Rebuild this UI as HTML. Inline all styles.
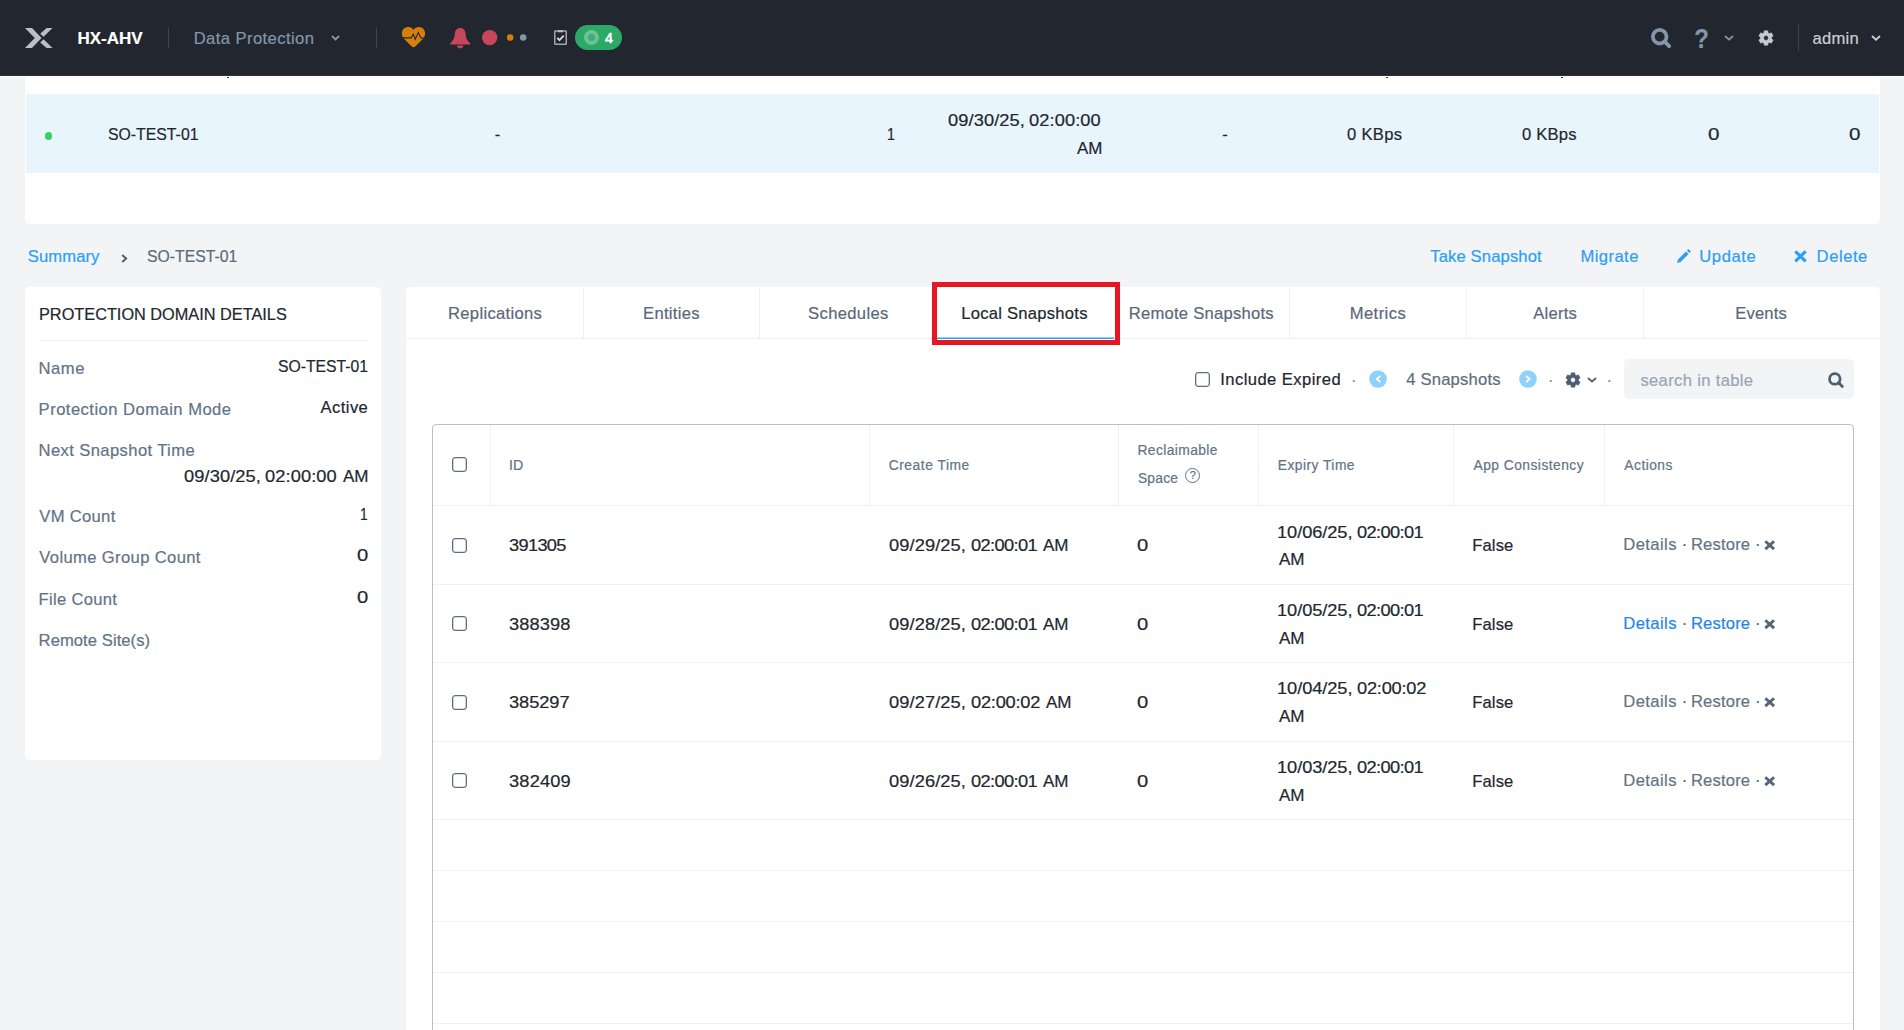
<!DOCTYPE html>
<html lang="en"><head><meta charset="utf-8"><title>HX-AHV - Data Protection</title>
<style>
html,body{margin:0;padding:0}
body{width:1904px;height:1030px;overflow:hidden;background:#f2f4f6;font-family:"Liberation Sans",sans-serif;position:relative}
.t{position:absolute;white-space:nowrap;line-height:1;-webkit-text-stroke:.2px}
.a{position:absolute}
.cb{position:absolute;width:13px;height:13px;border:1px solid #5c6e86;border-radius:3px;background:#fff;box-shadow:inset 0 0 0 .3px #5c6e86}
.vs{position:absolute;width:1px;background:#eef0f3}
.hs{position:absolute;height:1px;background:#eef0f3}
svg{position:absolute;overflow:visible}
</style></head><body>

<div class="a" style="left:25px;top:60px;width:1855px;height:164px;background:#fff;border-radius:0 0 5px 5px"></div>
<div class="a" style="left:26px;top:94px;width:1853px;height:78.5px;background:#e9f5fd"></div>
<div class="a" style="left:227px;top:76px;width:2px;height:2px;background:#2b3038"></div>
<div class="a" style="left:1386px;top:76px;width:2px;height:2px;background:#2b3038"></div>
<div class="a" style="left:1561px;top:76px;width:2px;height:2px;background:#2b3038"></div>
<div class="a" style="left:45px;top:132px;width:7px;height:7.5px;border-radius:50%;background:#36d068"></div>
<span class="t" style="left:108.34px;top:127px;font-size:16.6px;color:#22272e;letter-spacing:-0.005px;transform:scaleX(0.953);transform-origin:0 0;">SO-TEST-01</span>
<span class="t" style="left:494.64px;top:127px;font-size:16.6px;color:#22272e;">-</span>
<span class="t" style="left:886.83px;top:127px;font-size:16.6px;color:#22272e;transform:scaleX(0.859);transform-origin:0 0;">1</span>
<span class="t" style="left:947.91px;top:113px;font-size:16.6px;color:#22272e;letter-spacing:0.085px;transform:scaleX(1.1);transform-origin:0 0;">09/30/25,</span>
<span class="t" style="left:1029.31px;top:113px;font-size:16.6px;color:#22272e;letter-spacing:0.084px;transform:scaleX(1.1);transform-origin:0 0;">02:00:00</span>
<span class="t" style="left:1076.55px;top:141px;font-size:16.6px;color:#22272e;letter-spacing:0.009px;transform:scaleX(1.022);transform-origin:0 0;">AM</span>
<span class="t" style="left:1222.34px;top:127px;font-size:16.6px;color:#22272e;">-</span>
<span class="t" style="left:1346.97px;top:127px;font-size:16.6px;color:#22272e;letter-spacing:0.305px;">0 KBps</span>
<span class="t" style="left:1521.97px;top:127px;font-size:16.6px;color:#22272e;letter-spacing:0.205px;">0 KBps</span>
<span class="t" style="left:1707.88px;top:127px;font-size:16.6px;color:#22272e;transform:scaleX(1.242);transform-origin:0 0;">0</span>
<span class="t" style="left:1848.98px;top:127px;font-size:16.6px;color:#22272e;transform:scaleX(1.242);transform-origin:0 0;">0</span>
<div class="a" style="left:0;top:76px;width:1904px;height:1px;background:#fff"></div>
<div class="a" style="left:0;top:75px;width:1904px;height:1px;background:#2b2f37"></div>
<div class="a" style="left:0;top:0;width:1904px;height:75px;background:#22262e"></div>
<svg style="left:24.8px;top:27.9px" width="27.5" height="20" viewBox="0 0 27.5 20"><g fill="#b9bfcb">
<path d="M0 0H7L16.600 10.100 7 20H0L9.800 10.100Z"/>
<path d="M21.600 0H27.500L18.600 8.700 15.200 5.750Z"/>
<path d="M15.200 14.400L18.600 11.300 27.500 20H21.600Z"/>
</g></svg>
<span class="t" style="left:77.44px;top:30px;font-size:17px;color:#ffffff;font-weight:700;">HX-AHV</span>
<div class="a" style="left:168px;top:28px;width:1px;height:20px;background:#3c4554"></div>
<span class="t" style="left:193.72px;top:31px;font-size:16.6px;color:#8496ab;letter-spacing:0.418px;">Data Protection</span>
<svg style="left:331px;top:35px" width="9" height="6" viewBox="0 0 9 6"><path d="M1 1L4.5 4.5 8 1" fill="none" stroke="#8496ab" stroke-width="1.8"/></svg>
<div class="a" style="left:376px;top:28px;width:1px;height:20px;background:#3c4554"></div>
<svg style="left:402px;top:27px" width="23.100" height="20.400" viewBox="0 0 23.100 20.400">
<path d="M11.500 3C12.600 1.200 14.400 0 16.800 0 20.400 0 23.100 2.800 23.100 6.400 23.100 8.600 22.300 10.400 20.800 12L13.200 19.600C12.200 20.600 10.800 20.600 9.800 19.600L2.200 12C.7 10.400 -.1 8.600 -.1 6.400 -.1 2.800 2.600 0 6.200 0 8.600 0 10.400 1.200 11.500 3Z" fill="#d6800b"/>
<path d="M1.100 10.900H9.100L11.400 7.300 13.300 12.300 16.300 5.600 18.800 11 21.600 10.900" fill="none" stroke="#22262e" stroke-width="1.150" stroke-linejoin="miter"/></svg>
<svg style="left:450px;top:27.800px" width="20.400" height="20.400" viewBox="0 0 20.400 20.400">
<path d="M10.200 0C6.800 0 5 2.500 4.800 5.800 4.600 10 3.600 12.400 .3 15.200 0 15.500 0 16.400 .6 16.400H19.800C20.400 16.400 20.400 15.500 20.100 15.200 16.800 12.400 15.800 10 15.600 5.800 15.400 2.500 13.600 0 10.200 0Z" fill="#c8465c"/>
<path d="M7.100 17.500H13.300A3.100 2.800 0 0 1 7.100 17.500Z" fill="#c8465c"/></svg>
<svg style="left:480px;top:28px" width="50" height="20" viewBox="480 28 50 20"><circle cx="489.700" cy="37.600" r="7.700" fill="#c8465c"/><circle cx="510.200" cy="37.600" r="3.250" fill="#d6800b"/><circle cx="523.200" cy="37.600" r="3.250" fill="#8496ab"/></svg>
<svg style="left:554px;top:30px" width="13" height="15" viewBox="0 0 13 15">
<rect x=".75" y=".95" width="11.500" height="13.300" rx=".5" fill="none" stroke="#9ea5b3" stroke-width="1.500"/>
<rect x="4" y=".2" width="5" height="2.100" fill="#b9bec9"/>
<path d="M3.300 7.800L5.500 10.100 9.700 5.700" fill="none" stroke="#d3d6dd" stroke-width="1.900"/></svg>
<div class="a" style="left:575px;top:25px;width:47.3px;height:25px;border-radius:12.5px;background:#2ca867"></div>
<div class="a" style="left:584px;top:30px;width:7px;height:7px;border:4px solid #6cc392;border-radius:50%;background:#47a97a"></div>
<span class="t" style="left:604.72px;top:32px;font-size:13.8px;color:#ffffff;-webkit-text-stroke:.6px;transform:scaleX(1.03);transform-origin:0 0;">4</span>
<svg style="left:1651px;top:28px" width="20" height="20" viewBox="0 0 20 20">
<circle cx="8.700" cy="8.700" r="6.800" fill="none" stroke="#8496ab" stroke-width="3.800"/>
<path d="M13.400 13.400L18.200 18.200" stroke="#8496ab" stroke-width="3.800" stroke-linecap="round"/></svg>
<span class="t" style="left:1694.22px;top:24px;font-size:28.5px;color:#8496ab;font-weight:700;transform:scaleX(.84);transform-origin:1.3px 0;">?</span>
<svg style="left:1723.5px;top:34.7px" width="10" height="6" viewBox="0 0 10 6"><path d="M1 1L5 4.600 9 1" fill="none" stroke="#8496ab" stroke-width="1.8"/></svg>
<svg style="left:1757.5px;top:29.5px" width="16" height="16" viewBox="-8 -8 16 16"><path d="M2.17 -5.11L1.80 -7.23L-1.80 -7.23L-2.17 -5.11L-3.34 -4.43L-5.36 -5.18L-7.16 -2.05L-5.51 -0.68L-5.51 0.68L-7.16 2.05L-5.36 5.18L-3.34 4.43L-2.17 5.11L-1.80 7.23L1.80 7.23L2.17 5.11L3.34 4.43L5.36 5.18L7.16 2.05L5.51 0.68L5.51 -0.68L7.16 -2.05L5.36 -5.18L3.34 -4.43ZM2.4 0A2.4 2.4 0 1 0 -2.4 0 2.4 2.4 0 1 0 2.4 0Z" fill="#c4c9d4" fill-rule="evenodd" stroke="#c4c9d4" stroke-width=".5" stroke-linejoin="round"/></svg>
<div class="a" style="left:1798px;top:24px;width:1px;height:27px;background:#3c4554"></div>
<span class="t" style="left:1812.59px;top:31px;font-size:16.6px;color:#c9ced8;letter-spacing:0.231px;">admin</span>
<svg style="left:1871px;top:34.5px" width="10" height="6" viewBox="0 0 10 6"><path d="M1 1L5 4.600 9 1" fill="none" stroke="#c9ced8" stroke-width="1.9"/></svg>
<span class="t" style="left:27.80px;top:249px;font-size:16.6px;color:#2a9ff5;letter-spacing:0.100px;">Summary</span>
<svg style="left:120.5px;top:253.500px" width="7" height="9" viewBox="0 0 7 9"><path d="M1.200 1L5.200 4.500 1.200 8" fill="none" stroke="#4d5a6b" stroke-width="1.900"/></svg>
<span class="t" style="left:146.84px;top:249px;font-size:16.6px;color:#5d6a79;transform:scaleX(0.95);transform-origin:0 0;">SO-TEST-01</span>
<span class="t" style="left:1430.22px;top:249px;font-size:16.6px;color:#2a9ff5;letter-spacing:0.144px;">Take Snapshot</span>
<span class="t" style="left:1580.52px;top:249px;font-size:16.6px;color:#2a9ff5;letter-spacing:0.422px;">Migrate</span>
<svg style="left:1676.200px;top:248.600px" width="15" height="15" viewBox="0 0 14 14"><g fill="#2a9ff5">
<path d="M9.300 2.300L11.700 4.700 4.300 12.100 1 13 1.900 9.700Z"/><path d="M10.200 1.400L11.100 .5Q11.600 0 12.100 .5L13.500 1.900Q14 2.400 13.500 2.900L12.600 3.800Z"/></g></svg>
<span class="t" style="left:1699.31px;top:249px;font-size:16.6px;color:#2a9ff5;letter-spacing:0.575px;">Update</span>
<svg style="left:1794px;top:250px" width="13" height="12.600" viewBox="0 0 13 12.600"><path d="M1.300 1.300L11.700 11.300M11.700 1.300L1.300 11.300" stroke="#2a9ff5" stroke-width="3.100"/></svg>
<span class="t" style="left:1816.62px;top:249px;font-size:16.6px;color:#2a9ff5;letter-spacing:0.544px;">Delete</span>
<div class="a" style="left:25px;top:287px;width:356px;height:473px;background:#fff;border-radius:5px"></div>
<span class="t" style="left:38.55px;top:307px;font-size:16.6px;color:#22272e;transform:scaleX(0.982);transform-origin:0 0;">PROTECTION DOMAIN DETAILS</span>
<div class="hs" style="left:39px;top:340px;width:329px;background:#eef0f2"></div>
<span class="t" style="left:38.62px;top:361px;font-size:16.6px;color:#627386;letter-spacing:0.518px;">Name</span>
<span class="t" style="left:277.74px;top:359px;font-size:16.6px;color:#22272e;transform:scaleX(0.948);transform-origin:0 0;">SO-TEST-01</span>
<span class="t" style="left:38.62px;top:402px;font-size:16.6px;color:#627386;letter-spacing:0.467px;">Protection Domain Mode</span>
<span class="t" style="left:320.55px;top:400px;font-size:16.6px;color:#22272e;letter-spacing:0.422px;">Active</span>
<span class="t" style="left:38.62px;top:443px;font-size:16.6px;color:#627386;letter-spacing:0.389px;">Next Snapshot Time</span>
<span class="t" style="left:183.81px;top:469px;font-size:16.6px;color:#22272e;letter-spacing:0.085px;transform:scaleX(1.1);transform-origin:0 0;">09/30/25,</span>
<span class="t" style="left:265.21px;top:469px;font-size:16.6px;color:#22272e;letter-spacing:0.084px;transform:scaleX(1.1);transform-origin:0 0;">02:00:00</span>
<span class="t" style="left:342.95px;top:469px;font-size:16.6px;color:#22272e;letter-spacing:-0.008px;transform:scaleX(1.027);transform-origin:0 0;">AM</span>
<span class="t" style="left:39.35px;top:509px;font-size:16.6px;color:#627386;letter-spacing:0.302px;">VM Count</span>
<span class="t" style="left:360.37px;top:507px;font-size:16.6px;color:#22272e;transform:scaleX(0.831);transform-origin:0 0;">1</span>
<span class="t" style="left:39.35px;top:550px;font-size:16.6px;color:#627386;letter-spacing:0.361px;">Volume Group Count</span>
<span class="t" style="left:356.89px;top:548px;font-size:16.6px;color:#22272e;transform:scaleX(1.217);transform-origin:0 0;">0</span>
<span class="t" style="left:38.62px;top:592px;font-size:16.6px;color:#627386;letter-spacing:0.291px;">File Count</span>
<span class="t" style="left:356.89px;top:590px;font-size:16.6px;color:#22272e;transform:scaleX(1.217);transform-origin:0 0;">0</span>
<span class="t" style="left:38.62px;top:633px;font-size:16.6px;color:#627386;letter-spacing:0.062px;">Remote Site(s)</span>
<div class="a" style="left:406px;top:287px;width:1474px;height:760px;background:#fff;border-radius:5px"></div>
<div class="hs" style="left:406px;top:338px;width:1474px;background:#eef0f2"></div>
<div class="vs" style="left:583px;top:288px;height:50px"></div>
<div class="vs" style="left:759px;top:288px;height:50px"></div>
<div class="vs" style="left:1289px;top:288px;height:50px"></div>
<div class="vs" style="left:1466px;top:288px;height:50px"></div>
<div class="vs" style="left:1643px;top:288px;height:50px"></div>
<span class="t" style="left:448.02px;top:306px;font-size:16.6px;color:#5a6878;letter-spacing:0.311px;">Replications</span>
<span class="t" style="left:643.02px;top:306px;font-size:16.6px;color:#5a6878;letter-spacing:0.294px;">Entities</span>
<span class="t" style="left:808.10px;top:306px;font-size:16.6px;color:#5a6878;letter-spacing:0.338px;">Schedules</span>
<span class="t" style="left:961.22px;top:306px;font-size:16.6px;color:#22272e;letter-spacing:0.254px;">Local Snapshots</span>
<span class="t" style="left:1128.72px;top:306px;font-size:16.6px;color:#5a6878;letter-spacing:0.255px;">Remote Snapshots</span>
<span class="t" style="left:1349.72px;top:306px;font-size:16.6px;color:#5a6878;letter-spacing:0.426px;">Metrics</span>
<span class="t" style="left:1533.25px;top:306px;font-size:16.6px;color:#5a6878;letter-spacing:0.234px;">Alerts</span>
<span class="t" style="left:1735.22px;top:306px;font-size:16.6px;color:#5a6878;letter-spacing:0.179px;">Events</span>
<div class="a" style="left:937px;top:337px;width:177px;height:1px;background:#22a5f7;opacity:.5"></div>
<div class="a" style="left:937px;top:338px;width:177px;height:1px;background:#22a5f7"></div>
<div class="a" style="left:932px;top:282px;width:177.500px;height:52.500px;border:5.250px solid #e81624"></div>
<div class="cb" style="left:1195px;top:372px"></div>
<span class="t" style="left:1220.26px;top:372px;font-size:16.6px;color:#22272e;letter-spacing:0.430px;">Include Expired</span>
<span class="t" style="left:1351.09px;top:373px;font-size:16.6px;color:#7b8898;">·</span>
<svg style="left:1368.5px;top:370px" width="18" height="18" viewBox="-9 -9 18 18"><circle r="8.800" fill="#8ed1fb"/><path d="M2.2 -3L-1.200 0 2.200 3" fill="none" stroke="#fff" stroke-width="1.700"/></svg>
<span class="t" style="left:1406.22px;top:372px;font-size:16.6px;color:#5f6c7b;letter-spacing:0.202px;">4 Snapshots</span>
<svg style="left:1519px;top:370px" width="18" height="18" viewBox="-9 -9 18 18"><circle r="8.800" fill="#8ed1fb"/><path d="M-1.800 -3L1.600 0 -1.800 3" fill="none" stroke="#fff" stroke-width="1.700"/></svg>
<span class="t" style="left:1547.99px;top:373px;font-size:16.6px;color:#7b8898;">·</span>
<svg style="left:1564.500px;top:371.500px" width="16" height="16" viewBox="-8 -8 16 16"><path d="M2.17 -5.11L1.80 -7.23L-1.80 -7.23L-2.17 -5.11L-3.34 -4.43L-5.36 -5.18L-7.16 -2.05L-5.51 -0.68L-5.51 0.68L-7.16 2.05L-5.36 5.18L-3.34 4.43L-2.17 5.11L-1.80 7.23L1.80 7.23L2.17 5.11L3.34 4.43L5.36 5.18L7.16 2.05L5.51 0.68L5.51 -0.68L7.16 -2.05L5.36 -5.18L3.34 -4.43ZM2.4 0A2.4 2.4 0 1 0 -2.4 0 2.4 2.4 0 1 0 2.4 0Z" fill="#4f5d70" fill-rule="evenodd" stroke="#4f5d70" stroke-width=".5" stroke-linejoin="round"/></svg>
<svg style="left:1587px;top:376.500px" width="10" height="6" viewBox="0 0 10 6"><path d="M1 1L5 4.600 9 1" fill="none" stroke="#4f5d70" stroke-width="1.800"/></svg>
<span class="t" style="left:1606.49px;top:373px;font-size:16.6px;color:#7b8898;">·</span>
<div class="a" style="left:1624px;top:359px;width:230px;height:40px;border-radius:5px;background:#f2f4f6"></div>
<span class="t" style="left:1640.43px;top:373px;font-size:16.6px;color:#9aa5b5;letter-spacing:0.335px;">search in table</span>
<svg style="left:1828px;top:372.400px" width="15.500" height="15.700" viewBox="0 0 20 20">
<circle cx="8.800" cy="8.800" r="6.800" fill="none" stroke="#4f5d70" stroke-width="3.600"/>
<path d="M13.500 13.500L18.500 18.500" stroke="#4f5d70" stroke-width="3.600" stroke-linecap="round"/></svg>
<div class="a" style="left:432px;top:424px;width:1420px;height:700px;border:1px solid #b6c0ce;border-radius:4px"></div>
<div class="vs" style="left:490px;top:425px;height:80px"></div>
<div class="vs" style="left:869px;top:425px;height:80px"></div>
<div class="vs" style="left:1118px;top:425px;height:80px"></div>
<div class="vs" style="left:1258px;top:425px;height:80px"></div>
<div class="vs" style="left:1453px;top:425px;height:80px"></div>
<div class="vs" style="left:1604px;top:425px;height:80px"></div>
<div class="hs" style="left:433px;top:505px;width:1420px"></div>
<div class="hs" style="left:433px;top:584px;width:1420px"></div>
<div class="hs" style="left:433px;top:662px;width:1420px"></div>
<div class="hs" style="left:433px;top:741px;width:1420px"></div>
<div class="hs" style="left:433px;top:819px;width:1420px"></div>
<div class="hs" style="left:433px;top:870px;width:1420px"></div>
<div class="hs" style="left:433px;top:921px;width:1420px"></div>
<div class="hs" style="left:433px;top:972px;width:1420px"></div>
<div class="hs" style="left:433px;top:1023px;width:1420px"></div>
<div class="cb" style="left:452px;top:457px"></div>
<span class="t" style="left:508.87px;top:459px;font-size:13.8px;color:#627386;transform:scaleX(1.03);transform-origin:0 0;">ID</span>
<span class="t" style="left:888.66px;top:459px;font-size:13.8px;color:#627386;letter-spacing:0.550px;">Create Time</span>
<span class="t" style="left:1137.45px;top:444px;font-size:13.8px;color:#627386;letter-spacing:0.416px;">Reclaimable</span>
<span class="t" style="left:1137.93px;top:472px;font-size:13.8px;color:#627386;letter-spacing:0.237px;">Space</span>
<div class="a" style="left:1185px;top:467.600px;width:13px;height:13px;border:1px solid #627386;border-radius:50%"></div>
<span class="t" style="left:1189.86px;top:470px;font-size:11px;color:#627386;">?</span>
<span class="t" style="left:1277.75px;top:459px;font-size:13.8px;color:#627386;letter-spacing:0.472px;">Expiry Time</span>
<span class="t" style="left:1473.55px;top:459px;font-size:13.8px;color:#627386;letter-spacing:0.467px;">App Consistency</span>
<span class="t" style="left:1624.35px;top:459px;font-size:13.8px;color:#627386;letter-spacing:0.470px;">Actions</span>
<div class="cb" style="left:452px;top:538px"></div>
<span class="t" style="left:509.31px;top:538px;font-size:16.6px;color:#22272e;letter-spacing:-0.623px;transform:scaleX(1.1);transform-origin:0 0;">391305</span>
<span class="t" style="left:889.11px;top:538px;font-size:16.6px;color:#22272e;letter-spacing:0.085px;transform:scaleX(1.1);transform-origin:0 0;">09/29/25,</span>
<span class="t" style="left:970.51px;top:538px;font-size:16.6px;color:#22272e;letter-spacing:-0.568px;transform:scaleX(1.1);transform-origin:0 0;">02:00:01</span>
<span class="t" style="left:1043.05px;top:538px;font-size:16.6px;color:#22272e;letter-spacing:-0.008px;transform:scaleX(1.027);transform-origin:0 0;">AM</span>
<span class="t" style="left:1137.39px;top:538px;font-size:16.6px;color:#22272e;transform:scaleX(1.217);transform-origin:0 0;">0</span>
<span class="t" style="left:1277.38px;top:525px;font-size:16.6px;color:#22272e;letter-spacing:-0.071px;transform:scaleX(1.1);transform-origin:0 0;">10/06/25,</span>
<span class="t" style="left:1357.41px;top:525px;font-size:16.6px;color:#22272e;letter-spacing:-0.568px;transform:scaleX(1.1);transform-origin:0 0;">02:00:01</span>
<span class="t" style="left:1278.75px;top:552px;font-size:16.6px;color:#22272e;letter-spacing:-0.008px;transform:scaleX(1.027);transform-origin:0 0;">AM</span>
<span class="t" style="left:1472.22px;top:538px;font-size:16.6px;color:#22272e;letter-spacing:0.126px;">False</span>
<span class="t" style="left:1623.32px;top:537px;font-size:16.6px;color:#627386;letter-spacing:0.399px;">Details</span>
<span class="t" style="left:1681.69px;top:537px;font-size:16.6px;color:#4f5d70;">·</span>
<span class="t" style="left:1690.92px;top:537px;font-size:16.6px;color:#627386;letter-spacing:0.182px;">Restore</span>
<span class="t" style="left:1754.89px;top:537px;font-size:16.6px;color:#4f5d70;">·</span>
<svg style="left:1764.300px;top:539.6px" width="11.400" height="10.400" viewBox="0 0 11.400 10.400"><path d="M1.300 1.200L10.100 9.200M10.100 1.200L1.300 9.200" stroke="#56657a" stroke-width="2.900"/></svg>
<div class="cb" style="left:452px;top:616px"></div>
<span class="t" style="left:509.31px;top:617px;font-size:16.6px;color:#22272e;letter-spacing:0.068px;transform:scaleX(1.1);transform-origin:0 0;">388398</span>
<span class="t" style="left:889.11px;top:617px;font-size:16.6px;color:#22272e;letter-spacing:0.085px;transform:scaleX(1.1);transform-origin:0 0;">09/28/25,</span>
<span class="t" style="left:970.51px;top:617px;font-size:16.6px;color:#22272e;letter-spacing:-0.568px;transform:scaleX(1.1);transform-origin:0 0;">02:00:01</span>
<span class="t" style="left:1043.05px;top:617px;font-size:16.6px;color:#22272e;letter-spacing:-0.008px;transform:scaleX(1.027);transform-origin:0 0;">AM</span>
<span class="t" style="left:1137.39px;top:617px;font-size:16.6px;color:#22272e;transform:scaleX(1.217);transform-origin:0 0;">0</span>
<span class="t" style="left:1277.38px;top:603px;font-size:16.6px;color:#22272e;letter-spacing:-0.071px;transform:scaleX(1.1);transform-origin:0 0;">10/05/25,</span>
<span class="t" style="left:1357.41px;top:603px;font-size:16.6px;color:#22272e;letter-spacing:-0.568px;transform:scaleX(1.1);transform-origin:0 0;">02:00:01</span>
<span class="t" style="left:1278.75px;top:631px;font-size:16.6px;color:#22272e;letter-spacing:-0.008px;transform:scaleX(1.027);transform-origin:0 0;">AM</span>
<span class="t" style="left:1472.22px;top:617px;font-size:16.6px;color:#22272e;letter-spacing:0.126px;">False</span>
<span class="t" style="left:1623.32px;top:616px;font-size:16.6px;color:#1f86e6;letter-spacing:0.399px;">Details</span>
<span class="t" style="left:1681.69px;top:616px;font-size:16.6px;color:#4f5d70;">·</span>
<span class="t" style="left:1690.92px;top:616px;font-size:16.6px;color:#1f86e6;letter-spacing:0.182px;">Restore</span>
<span class="t" style="left:1754.89px;top:616px;font-size:16.6px;color:#4f5d70;">·</span>
<svg style="left:1764.300px;top:618.6px" width="11.400" height="10.400" viewBox="0 0 11.400 10.400"><path d="M1.300 1.200L10.100 9.200M10.100 1.200L1.300 9.200" stroke="#56657a" stroke-width="2.900"/></svg>
<div class="cb" style="left:452px;top:695px"></div>
<span class="t" style="left:509.31px;top:695px;font-size:16.6px;color:#22272e;letter-spacing:-0.061px;transform:scaleX(1.1);transform-origin:0 0;">385297</span>
<span class="t" style="left:889.11px;top:695px;font-size:16.6px;color:#22272e;letter-spacing:0.085px;transform:scaleX(1.1);transform-origin:0 0;">09/27/25,</span>
<span class="t" style="left:970.51px;top:695px;font-size:16.6px;color:#22272e;letter-spacing:-0.217px;transform:scaleX(1.1);transform-origin:0 0;">02:00:02</span>
<span class="t" style="left:1045.75px;top:695px;font-size:16.6px;color:#22272e;letter-spacing:-0.008px;transform:scaleX(1.027);transform-origin:0 0;">AM</span>
<span class="t" style="left:1137.39px;top:695px;font-size:16.6px;color:#22272e;transform:scaleX(1.217);transform-origin:0 0;">0</span>
<span class="t" style="left:1277.38px;top:681px;font-size:16.6px;color:#22272e;letter-spacing:-0.071px;transform:scaleX(1.1);transform-origin:0 0;">10/04/25,</span>
<span class="t" style="left:1357.41px;top:681px;font-size:16.6px;color:#22272e;letter-spacing:-0.217px;transform:scaleX(1.1);transform-origin:0 0;">02:00:02</span>
<span class="t" style="left:1278.75px;top:709px;font-size:16.6px;color:#22272e;letter-spacing:-0.008px;transform:scaleX(1.027);transform-origin:0 0;">AM</span>
<span class="t" style="left:1472.22px;top:695px;font-size:16.6px;color:#22272e;letter-spacing:0.126px;">False</span>
<span class="t" style="left:1623.32px;top:694px;font-size:16.6px;color:#627386;letter-spacing:0.399px;">Details</span>
<span class="t" style="left:1681.69px;top:694px;font-size:16.6px;color:#4f5d70;">·</span>
<span class="t" style="left:1690.92px;top:694px;font-size:16.6px;color:#627386;letter-spacing:0.182px;">Restore</span>
<span class="t" style="left:1754.89px;top:694px;font-size:16.6px;color:#4f5d70;">·</span>
<svg style="left:1764.300px;top:696.6px" width="11.400" height="10.400" viewBox="0 0 11.400 10.400"><path d="M1.300 1.200L10.100 9.200M10.100 1.200L1.300 9.200" stroke="#56657a" stroke-width="2.900"/></svg>
<div class="cb" style="left:452px;top:773px"></div>
<span class="t" style="left:509.31px;top:774px;font-size:16.6px;color:#22272e;letter-spacing:0.157px;transform:scaleX(1.1);transform-origin:0 0;">382409</span>
<span class="t" style="left:889.11px;top:774px;font-size:16.6px;color:#22272e;letter-spacing:0.085px;transform:scaleX(1.1);transform-origin:0 0;">09/26/25,</span>
<span class="t" style="left:970.51px;top:774px;font-size:16.6px;color:#22272e;letter-spacing:-0.568px;transform:scaleX(1.1);transform-origin:0 0;">02:00:01</span>
<span class="t" style="left:1043.05px;top:774px;font-size:16.6px;color:#22272e;letter-spacing:-0.008px;transform:scaleX(1.027);transform-origin:0 0;">AM</span>
<span class="t" style="left:1137.39px;top:774px;font-size:16.6px;color:#22272e;transform:scaleX(1.217);transform-origin:0 0;">0</span>
<span class="t" style="left:1277.38px;top:760px;font-size:16.6px;color:#22272e;letter-spacing:-0.071px;transform:scaleX(1.1);transform-origin:0 0;">10/03/25,</span>
<span class="t" style="left:1357.41px;top:760px;font-size:16.6px;color:#22272e;letter-spacing:-0.568px;transform:scaleX(1.1);transform-origin:0 0;">02:00:01</span>
<span class="t" style="left:1278.75px;top:788px;font-size:16.6px;color:#22272e;letter-spacing:-0.008px;transform:scaleX(1.027);transform-origin:0 0;">AM</span>
<span class="t" style="left:1472.22px;top:774px;font-size:16.6px;color:#22272e;letter-spacing:0.126px;">False</span>
<span class="t" style="left:1623.32px;top:773px;font-size:16.6px;color:#627386;letter-spacing:0.399px;">Details</span>
<span class="t" style="left:1681.69px;top:773px;font-size:16.6px;color:#4f5d70;">·</span>
<span class="t" style="left:1690.92px;top:773px;font-size:16.6px;color:#627386;letter-spacing:0.182px;">Restore</span>
<span class="t" style="left:1754.89px;top:773px;font-size:16.6px;color:#4f5d70;">·</span>
<svg style="left:1764.300px;top:775.6px" width="11.400" height="10.400" viewBox="0 0 11.400 10.400"><path d="M1.300 1.200L10.100 9.200M10.100 1.200L1.300 9.200" stroke="#56657a" stroke-width="2.900"/></svg>
</body></html>
